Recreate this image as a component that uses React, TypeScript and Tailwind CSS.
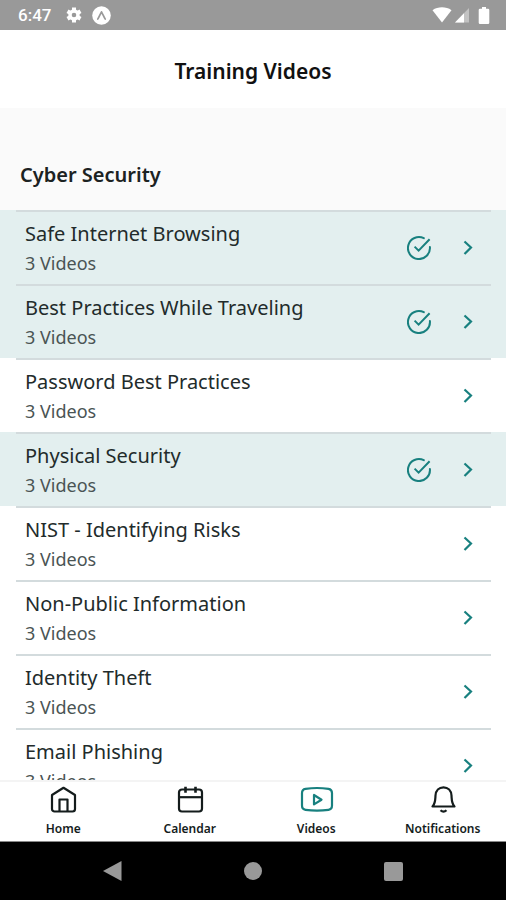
import type { ReactNode } from "react";

type Course = {
  title: string;
  videos: number;
  completed?: boolean;
};

const courses: Course[] = [
  { title: "Safe Internet Browsing", videos: 3, completed: true },
  { title: "Best Practices While Traveling", videos: 3, completed: true },
  { title: "Password Best Practices", videos: 3 },
  { title: "Physical Security", videos: 3, completed: true },
  { title: "NIST - Identifying Risks", videos: 3 },
  { title: "Non-Public Information", videos: 3 },
  { title: "Identity Theft", videos: 3 },
  { title: "Email Phishing", videos: 3 },
];

function StatusBar() {
  return (
    <div className="flex h-[30px] shrink-0 items-center justify-between bg-[#999999] pl-[18px] pr-4 text-white">
      <div className="flex items-center gap-3">
        <span className="w-9 font-['Roboto',sans-serif] text-[17px] leading-5 font-medium">6:47</span>
        <svg className="h-4 w-4" viewBox="0 0 16 16" aria-hidden="true">
          <circle cx="8" cy="8" r="4" fill="none" stroke="currentColor" strokeWidth="3.4" />
          <path
            d="M8 0.5v3M8 12.5v3M1.5 4.2l2.6 1.5M11.9 10.3l2.6 1.5M1.5 11.8l2.6-1.5M11.9 5.7l2.6-1.5"
            stroke="currentColor"
            strokeWidth="4"
          />
        </svg>
        <svg className="-ml-0.5 h-[19px] w-[19px]" viewBox="0 0 19 19" aria-hidden="true">
          <circle cx="9.5" cy="9.5" r="9.3" fill="currentColor" />
          <path
            d="M5.8 13C7 11.5 8 8.500 9.500 5.800c1.500 2.700 2.500 5.700 3.700 7.200"
            fill="none"
            stroke="#999999"
            strokeWidth="1.7"
            strokeLinecap="round"
            strokeLinejoin="round"
          />
        </svg>
      </div>
      <div className="flex items-center">
        <svg className="h-4 w-5" viewBox="0 0 20 16" aria-hidden="true">
          <path d="M0.5 3.2C6 -0.6 14 -0.6 19.5 3.2L10 15.5z" fill="currentColor" />
        </svg>
        <svg className="ml-0.5 h-4 w-4" viewBox="0 0 16 16" aria-hidden="true">
          <path d="M15 1v14.5H1z" fill="currentColor" opacity="0.4" />
          <path d="M10 6.2v9.3H1z" fill="currentColor" />
        </svg>
        <svg className="ml-2 h-[17px] w-3" viewBox="0 0 12 17" aria-hidden="true">
          <path
            d="M4 0h4v1.8h2a1.300 1.300 0 0 1 1.300 1.300v12.600a1.300 1.300 0 0 1-1.300 1.300H2a1.300 1.300 0 0 1-1.300-1.300V3.100A1.300 1.300 0 0 1 2 1.800h2z"
            fill="currentColor"
          />
        </svg>
      </div>
    </div>
  );
}

function CheckIcon() {
  return (
    <svg
      className="h-6 w-6"
      viewBox="0 0 24 24"
      fill="none"
      stroke="currentColor"
      strokeWidth="2"
      role="img"
      aria-label="Completed"
    >
      <path d="M16.800 2.200A11 11 0 1 0 22.900 11" strokeLinecap="round" />
      <path d="M7.600 10.600l4 4L22.600 3.300" />
    </svg>
  );
}

function ChevronIcon() {
  return (
    <svg
      className="h-4 w-3"
      viewBox="0 0 12 16"
      fill="none"
      stroke="currentColor"
      strokeWidth="2.2"
      aria-hidden="true"
    >
      <path d="M1.500 1.500l6.500 6-6.500 6.500" />
    </svg>
  );
}

function CourseRow({ title, videos, completed }: Course) {
  return (
    <li className={completed ? "bg-[#e3efef]" : "bg-white"}>
      <div className="mr-[15px] ml-4 border-t-2 border-[#d3dbdd]">
        <button type="button" className="flex h-[72px] w-full items-center pr-4 pl-[9px] text-left">
          <span className="flex flex-1 flex-col gap-1">
            <span className="text-xl leading-[26px] text-[#222b2b]">{title}</span>
            <span className="text-lg leading-6 text-[#4a5454]">{videos} Videos</span>
          </span>
          <span className="flex items-center gap-8 text-[#18807f]">
            {completed && <CheckIcon />}
            <ChevronIcon />
          </span>
        </button>
      </div>
    </li>
  );
}

function TabLink({ label, active, children }: { label: string; active?: boolean; children: ReactNode }) {
  return (
    <a href="#" aria-current={active ? "page" : undefined} className="flex flex-1 flex-col items-center pt-1">
      <svg
        className={active ? "h-8 w-9 text-[#18807f]" : "h-8 w-9 text-[#141c1c]"}
        viewBox="0 0 36 32"
        fill="none"
        stroke="currentColor"
        strokeWidth="2.2"
        strokeLinejoin="round"
        aria-hidden="true"
      >
        {children}
      </svg>
      <span className="mt-0.5 text-xs leading-[18px] font-semibold text-[#141c1c]">{label}</span>
    </a>
  );
}

function TabBar() {
  return (
    <nav className="flex h-[62px] shrink-0 border-t-2 border-b border-t-[#f4f4f4] border-b-[#888888] bg-white">
      <TabLink label="Home">
        <path d="M18.500 1.800L30 9V23a2.500 2.500 0 0 1-2.500 2.500h-18A2.500 2.500 0 0 1 7 23V9z" />
        <path d="M14.500 25.500V13.500h8v12" />
      </TabLink>
      <TabLink label="Calendar">
        <rect x="7" y="3.500" width="23" height="22" rx="3" />
        <path d="M7 11.200h23" />
        <path d="M13.500 0.800v6M23.500 0.800v6" strokeWidth="2.600" />
      </TabLink>
      <TabLink label="Videos" active>
        <path d="M7.500 2.800Q19 1.200 30.500 2.800Q34 3.300 34 7V19.500Q34 23.300 30.500 23.800Q19 25.400 7.500 23.800Q4 23.300 4 19.500V7Q4 3.300 7.500 2.800z" />
        <path d="M16 9v9.400l7.500-4.700z" />
      </TabLink>
      <TabLink label="Notifications">
        <path d="M7.500 20.500C10.500 17.500 10.200 14 10.500 9.500C10.800 4.500 14 1.300 18.500 1.300S26.200 4.500 26.500 9.500C26.800 14 26.500 17.500 29.500 20.500z" />
        <path d="M15.500 24.200q3 2.800 6 0" />
      </TabLink>
    </nav>
  );
}

function SystemBar() {
  return (
    <div className="flex h-[58px] shrink-0 items-center bg-black px-[43px] text-[#999999]">
      <button type="button" aria-label="Back" className="flex flex-1 justify-center">
        <svg className="h-5 w-5" viewBox="0 0 20 20" aria-hidden="true">
          <path d="M18.500 0v20L0 10z" fill="currentColor" />
        </svg>
      </button>
      <button type="button" aria-label="Home" className="flex flex-1 justify-center">
        <span className="h-[18px] w-[18px] rounded-full bg-[#999999]" />
      </button>
      <button type="button" aria-label="Recent apps" className="flex flex-1 justify-center">
        <span className="h-[19px] w-[19px] rounded-xs bg-[#999999]" />
      </button>
    </div>
  );
}

export default function App() {
  return (
    <div className="flex h-screen flex-col bg-[#fafafa] font-['Noto_Sans',sans-serif]">
      <StatusBar />
      <header className="flex h-[78px] shrink-0 items-center justify-center bg-white pt-1">
        <h1 className="text-[21px] leading-7 font-semibold text-[#111111]">Training Videos</h1>
      </header>
      <main className="min-h-0 flex-1 overflow-hidden">
        <h2 className="px-5 pt-[52px] pb-5 text-xl leading-[30px] font-semibold text-[#1c2222]">
          Cyber Security
        </h2>
        <ul>
          {courses.map((course) => (
            <CourseRow key={course.title} {...course} />
          ))}
        </ul>
      </main>
      <TabBar />
      <SystemBar />
    </div>
  );
}
